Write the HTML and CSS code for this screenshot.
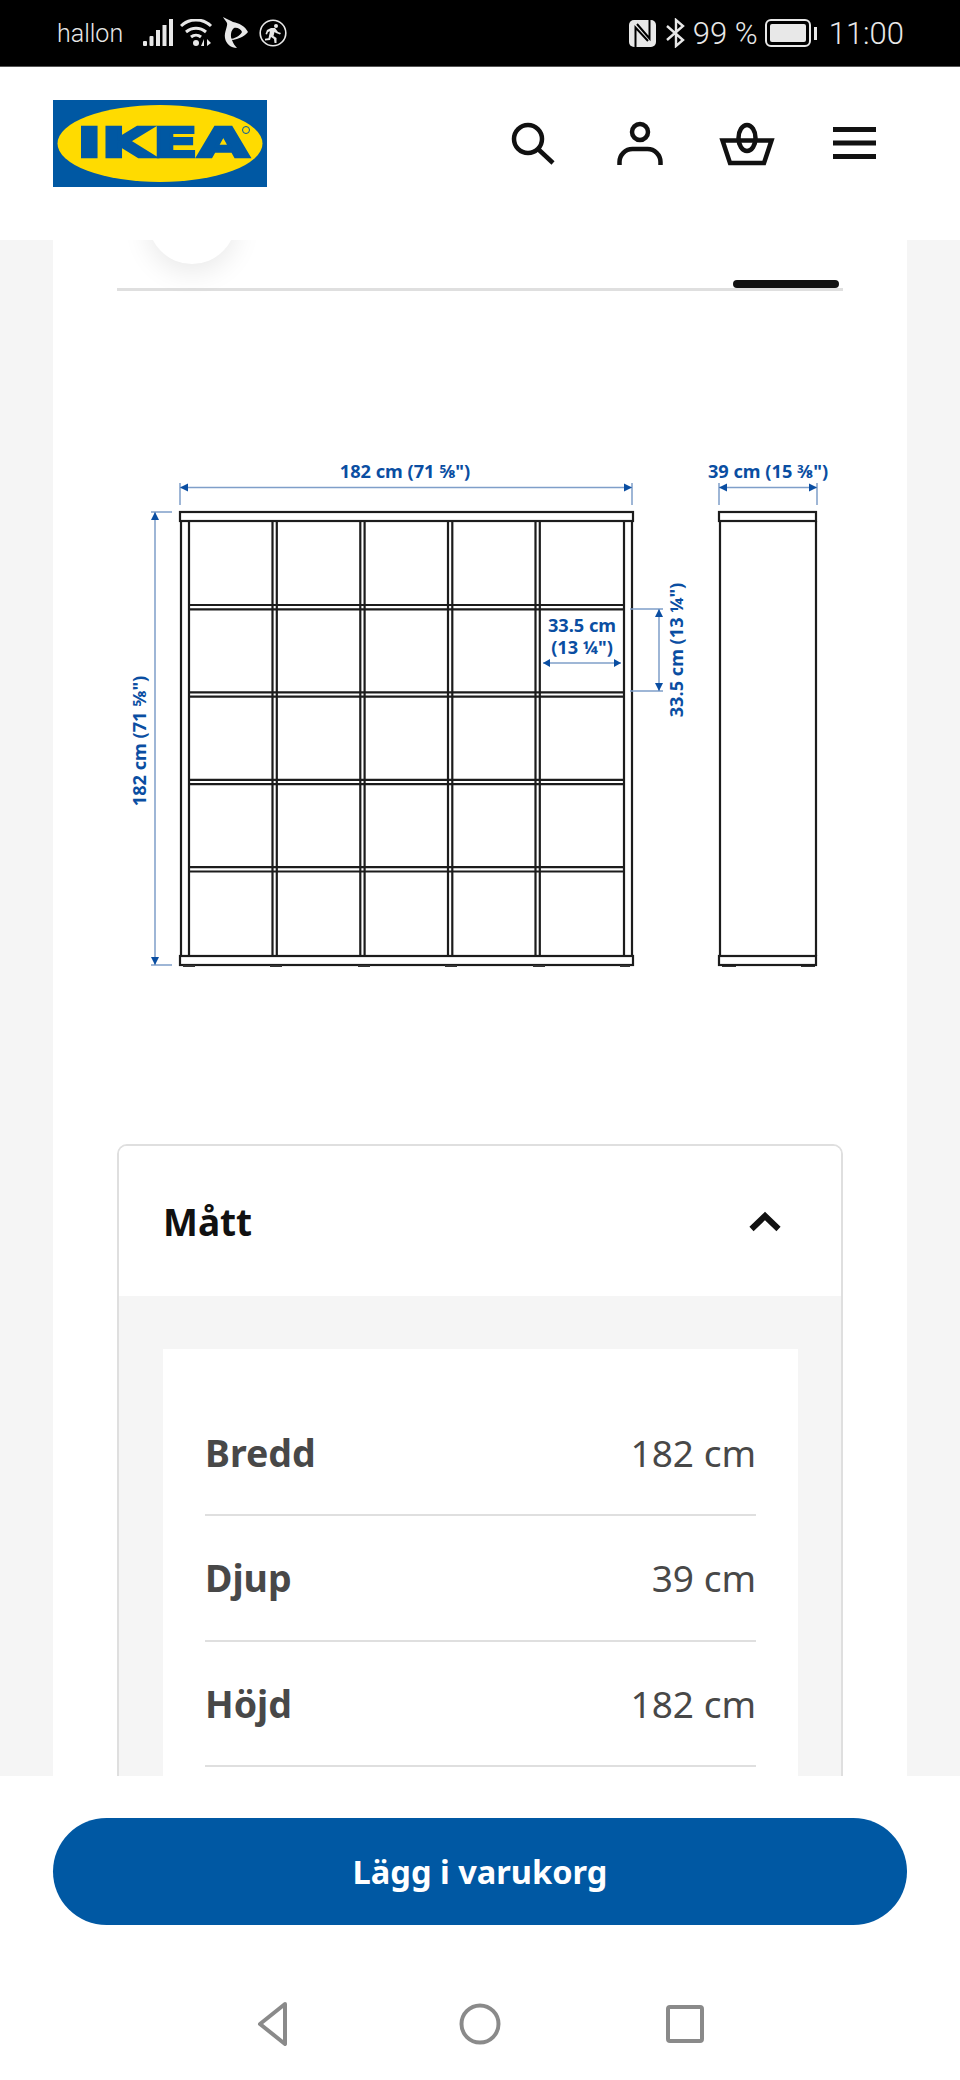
FILE: index.html
```html
<!DOCTYPE html>
<html lang="sv">
<head>
    <meta charset="UTF-8">
    <title>KALLAX - IKEA</title>
    <link rel="stylesheet" href="styles.css">
</head>
<body>

    <!-- Status bar -->
    <div class="statusbar">
        <div class="status-left">
            <span class="carrier">hallon</span>
            <svg class="ic-signal" width="30" height="28" viewBox="0 0 30 28">
                <rect x="0" y="22" width="4" height="5" rx="1"/>
                <rect x="6.5" y="17" width="4" height="10" rx="1"/>
                <rect x="13" y="11" width="4" height="16"/>
                <rect x="19.5" y="6" width="4" height="21"/>
                <rect x="26" y="0" width="4" height="27"/>
            </svg>
            <svg class="ic-wifi" width="34" height="28" viewBox="0 0 34 28">
                <path d="M1 7C9-1 23-1 31 7M6 13c6-5 14-5 20 0M11 18c3-2.500 7-2.500 10 0" fill="none" stroke="#e8e8e8" stroke-width="3"/>
                <circle cx="16" cy="24" r="3"/>
                <path d="M24 20l-3 7h3zM27 20l4 4-4 3z"/>
            </svg>
            <svg class="ic-leaf" width="26" height="32" viewBox="0 0 26 32">
                <path d="M1 0c3 2 7 3 10 5 6 1 12 4 15 10-4 5-10 7-15 8l-3-1c4 0 10-3 12-7-1-3-5-5-8-4-3 2-4 8-2 12 1 3 3 6 5 8-6 0-11-4-12-10C2 15 6 9 5 6 4 4 2 2 1 0z"/>
            </svg>
            <svg class="ic-run" width="28" height="28" viewBox="0 0 28 28">
                <circle cx="14" cy="14" r="12.800" fill="none" stroke="#e8e8e8" stroke-width="1.600"/>
                <circle cx="17" cy="7" r="2"/>
                <path d="M8 11l4-2h4l3 4 3 1-1 1.500-4-1.500-1.500-1-1 4 3 2v5h-2l-.5-4-3-2-1 3-5 .5v-1.800l3.500-.5 1.500-7-2 .8-1 2.500-1.500-.5z"/>
            </svg>
        </div>
        <div class="status-right">
            <svg class="ic-nfc" width="27" height="27" viewBox="0 0 27 27">
                <rect width="27" height="27" rx="5"/>
                <path d="M6.500 27V7.500L19 21M8 4l12.500 14.500V0" fill="none" stroke="#000" stroke-width="2"/>
            </svg>
            <svg class="ic-bt" width="20" height="30" viewBox="0 0 20 30">
                <path d="M1 8l16 14-7 6V2l7 6L1 22" fill="none" stroke="#e8e8e8" stroke-width="2.400"/>
            </svg>
            <span class="percent">99 %</span>
            <div class="battery"><div class="battery-level"></div></div>
            <div class="battery-nub"></div>
            <span class="clock">11:00</span>
        </div>
    </div>

    <!-- Header -->
    <div class="header">
        <svg class="logo" width="214" height="87" viewBox="0 0 214 87">
            <rect width="214" height="87" fill="#0058a3"/>
            <ellipse cx="107" cy="43.500" rx="102.500" ry="38.500" fill="#ffdb00"/>
            <text class="logo-text" x="24" y="57" textLength="172" lengthAdjust="spacingAndGlyphs">IKEA</text>
            <circle cx="193" cy="30" r="3.500" fill="#ffdb00" stroke="#0058a3" stroke-width="1"/>
        </svg>
        <div class="header-icons">
            <svg width="56" height="48" viewBox="0 0 56 48">
                <circle cx="23" cy="20" r="14" class="ic-line"/>
                <path d="M33 30l15 14" class="ic-line"/>
            </svg>
            <svg width="56" height="48" viewBox="0 0 56 48">
                <circle cx="28" cy="13" r="8" class="ic-line"/>
                <path d="M7.500 46v-3a13 13 0 0 1 13-13h15a13 13 0 0 1 13 13v3" class="ic-line"/>
            </svg>
            <svg width="56" height="48" viewBox="0 0 56 48">
                <polygon points="3.500,21.500 52.500,21.500 45,44 11,44" class="ic-line"/>
                <ellipse cx="28" cy="19" rx="8.500" ry="13" class="ic-line"/>
            </svg>
            <svg width="56" height="48" viewBox="0 0 56 48">
                <rect x="7" y="8" width="43" height="5"/>
                <rect x="7" y="21.500" width="43" height="5"/>
                <rect x="7" y="35" width="43" height="5"/>
            </svg>
        </div>
    </div>

    <div class="scroll">
        <div class="column">
            <div class="thumbs">
                <div class="thumb"></div>
                <div class="thumb-bar"></div>
            </div>

            <svg class="drawing" width="726" height="853" viewBox="117 291 726 853">
                <!-- front view -->
                <g class="draw">
                    <rect x="180" y="512" width="453" height="9"/>
                    <rect x="180" y="956" width="453" height="9"/>
                    <path d="M181 521V956M189 521V956M624 521V956M632 521V956"/>
                    <path d="M272.500 521V956M276.800 521V956M360.300 521V956M364.600 521V956M448 521V956M452.300 521V956M535.500 521V956M539.800 521V956"/>
                    <path d="M190 605H623M190 609.300H623M190 692.400H623M190 696.700H623M190 779.800H623M190 784.100H623M190 867.200H623M190 871.500H623"/>
                </g>
                <!-- feet -->
                <path class="feet" d="M183 966h12M270 966h12M358 966h12M445 966h12M533 966h12M620 966h10M722 966h14M801 966h14"/>
                <!-- side view -->
                <g class="draw">
                    <rect x="719" y="512" width="97" height="9"/>
                    <rect x="719" y="956" width="97" height="9"/>
                    <path d="M720 521V956M816 521V956"/>
                </g>
                <!-- dimensions -->
                <g class="dim">
                    <path d="M180 483V505M632 483V505M180 487.500H632"/>
                    <path d="M151 512H172M151 965H172M155 512V965"/>
                    <path d="M719 483V505M817 483V505M719 487.500H817"/>
                    <path d="M543 663H621"/>
                    <path d="M630 609H663M630 691H663M659 609V691"/>
                </g>
                <g class="arrow">
                    <path d="M180 487.500l8-4v8zM632 487.500l-8-4v8z"/>
                    <path d="M155 512l-4 8h8zM155 965l-4-8h8z"/>
                    <path d="M719 487.500l8-4v8zM817 487.500l-8-4v8z"/>
                    <path d="M543 663l7-4v8zM621 663l-7-4v8z"/>
                    <path d="M659 609l-4 8h8zM659 691l-4-8h8z"/>
                </g>
                <text class="dim-text" x="405" y="478">182 cm (71 ⅝")</text>
                <text class="dim-text" x="768" y="478">39 cm (15 ⅜")</text>
                <text class="dim-text" x="582" y="632">33.5 cm</text>
                <text class="dim-text" x="582" y="654">(13 ¼")</text>
                <text class="dim-text" transform="translate(146 741) rotate(-90)">182 cm (71 ⅝")</text>
                <text class="dim-text" transform="translate(683 650) rotate(-90)">33.5 cm (13 ¼")</text>
            </svg>

            <!-- Accordion -->
            <div class="card">
                <div class="card-head">
                    <h2>Mått</h2>
                    <svg width="34" height="22" viewBox="0 0 34 22">
                        <path d="M3.500 19L17 6l13.500 13" class="chevron"/>
                    </svg>
                </div>
                <div class="card-body">
                    <div class="spec-list">
                        <div class="spec-row"><b>Bredd</b><span>182 cm</span></div>
                        <div class="spec-row"><b>Djup</b><span>39 cm</span></div>
                        <div class="spec-row"><b>Höjd</b><span>182 cm</span></div>
                    </div>
                </div>
            </div>
        </div>
    </div>

    <!-- Buy bar -->
    <div class="buybar">
        <button class="buy">Lägg i varukorg</button>
        <div class="navbar">
            <svg width="48" height="48" viewBox="0 0 48 48">
                <path d="M34 4L9 24l25 20z" class="nav-line"/>
            </svg>
            <svg width="48" height="48" viewBox="0 0 48 48">
                <circle cx="24" cy="24" r="18.500" class="nav-line"/>
            </svg>
            <svg width="48" height="48" viewBox="0 0 48 48">
                <rect x="7" y="7" width="34" height="34" rx="2" class="nav-line"/>
            </svg>
        </div>
    </div>

</body>
</html>
```

FILE: styles.css
```css
* {
    box-sizing: border-box;
}
body {
    margin: 0;
    height: 2080px;
    overflow: hidden;
    display: flex;
    flex-direction: column;
    font-family: "Noto Sans", "Open Sans", sans-serif;
    background-color: #ffffff;
}

/* status bar */
.statusbar {
    height: 67px;
    flex: none;
    display: flex;
    justify-content: space-between;
    align-items: center;
    padding: 0 56px 0 57px;
    background-color: #000000;
    border-bottom: 1px solid #555555;
    color: #e8e8e8;
    font-family: Roboto, sans-serif;
    font-weight: 300;
}
.statusbar svg {
    fill: #e8e8e8;
    display: block;
}
.status-left, .status-right {
    display: flex;
    align-items: center;
}
.carrier {
    font-size: 25px;
    width: 86px;
}
.ic-wifi {
    margin-left: 7px;
}
.ic-leaf {
    margin-left: 8px;
}
.ic-run {
    margin-left: 11px;
}
.ic-bt {
    margin-left: 10px;
}
.percent {
    font-size: 31px;
    margin-left: 7px;
    width: 72px;
    white-space: nowrap;
}
.battery {
    width: 46px;
    height: 28px;
    border: 2px solid #e8e8e8;
    border-radius: 6px;
    padding: 3px;
}
.battery-level {
    height: 100%;
    background-color: #e8e8e8;
    border-radius: 2px;
}
.battery-nub {
    width: 3px;
    height: 13px;
    margin-left: 3px;
    background-color: #e8e8e8;
}
.clock {
    font-size: 31px;
    margin-left: 12px;
}

/* header */
.header {
    height: 173px;
    flex: none;
    display: flex;
    justify-content: space-between;
    padding: 33px 78px 0 53px;
    background-color: #ffffff;
}
.logo {
    display: block;
}
.logo-text {
    font-family: "DejaVu Sans", sans-serif;
    font-weight: 700;
    font-size: 40px;
    fill: #0058a3;
    stroke: #0058a3;
    stroke-width: 2.5px;
}
.header-icons {
    display: flex;
    gap: 51px;
    margin-top: 19px;
    height: 48px;
}
.header-icons svg {
    fill: #111111;
}
.ic-line {
    fill: none;
    stroke: #111111;
    stroke-width: 4.5;
}
.chevron {
    fill: none;
    stroke: #111111;
    stroke-width: 6;
}

/* content */
.scroll {
    flex: 1;
    min-height: 0;
    overflow: hidden;
    padding: 0 53px;
    background-color: #f5f5f5;
}
.column {
    padding: 0 64px;
    background-color: #ffffff;
}
.thumbs {
    height: 51px;
    display: flex;
    justify-content: space-between;
    align-items: flex-end;
    border-bottom: 3px solid #dfdfdf;
}
.thumb {
    width: 88px;
    height: 88px;
    margin: 0 0 24px 31px;
    flex: none;
    border-radius: 50%;
    background-color: #ffffff;
    box-shadow: 0 8px 28px rgba(0, 0, 0, 0.09);
}
.thumb-bar {
    width: 106px;
    height: 8px;
    margin-right: 4px;
    border-radius: 4px;
    background-color: #111111;
}
.drawing {
    display: block;
}
.draw {
    fill: none;
    stroke: #1c1c1c;
    stroke-width: 2.2;
}
.feet {
    fill: none;
    stroke: #333333;
    stroke-width: 2;
}
.dim {
    fill: none;
    stroke: #7f9fc9;
    stroke-width: 1.5;
}
.arrow {
    fill: #0a4ea2;
}
.dim-text {
    font-size: 18.2px;
    font-weight: 700;
    fill: #0a4ea2;
    text-anchor: middle;
}

/* accordion */
.card {
    border: 2px solid #dfdfdf;
    border-radius: 10px 10px 0 0;
    overflow: hidden;
}
.card-head {
    height: 150px;
    display: flex;
    justify-content: space-between;
    align-items: center;
    padding: 0 59px 0 44px;
    background-color: #ffffff;
}
.card-head h2 {
    margin: 0;
    font-size: 37px;
    font-weight: 700;
    color: #111111;
}
.card-body {
    padding: 53px 43px 53px 44px;
    background-color: #f5f5f5;
}
.spec-list {
    padding: 41.5px 42px;
    background-color: #ffffff;
}
.spec-row {
    height: 125.5px;
    display: flex;
    justify-content: space-between;
    align-items: center;
    border-bottom: 2px solid #dfdfdf;
    font-size: 37px;
    color: #484848;
}
.spec-row b {
    font-size: 37.5px;
}

/* buy bar */
.buybar {
    height: 304px;
    flex: none;
    padding: 42px 53px 0;
    background-color: #ffffff;
}
.buy {
    display: block;
    width: 100%;
    height: 107px;
    border: none;
    border-radius: 54px;
    background-color: #0058a3;
    color: #ffffff;
    font-family: inherit;
    font-size: 32.6px;
    font-weight: 700;
    cursor: pointer;
}
.navbar {
    display: flex;
    justify-content: center;
    gap: 157px;
    margin-top: 75px;
}
.nav-line {
    fill: none;
    stroke: #8a8a8a;
    stroke-width: 4;
    stroke-linejoin: round;
}
```
